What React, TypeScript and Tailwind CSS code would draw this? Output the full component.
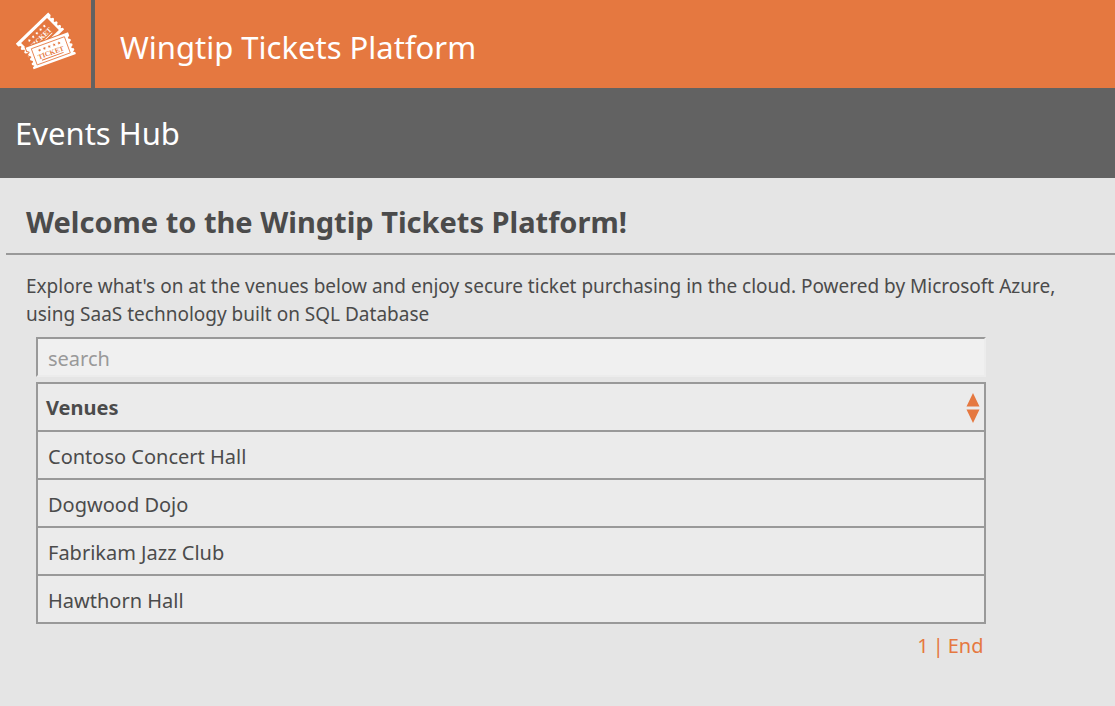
import React from "react";

const venues = ["Contoso Concert Hall", "Dogwood Dojo", "Fabrikam Jazz Club", "Hawthorn Hall"];

const outline =
  "M-22.5 -11.5 H22.5 V-8 L20.5 -6.5 L20.5 -5.5 L22.5 -4.5 V-3 L20.5 -1.5 V-.5 L22.5 .5 V2 L20.5 3.5 V4.5 L22.5 5.5 V7 L20.5 8.5 L22.5 9.5 V11.5 H-22.5 V9.5 L-20.5 8.5 L-22.5 7 V5.5 L-20.5 4.5 V3.5 L-22.5 2 V.5 L-20.5 -.5 V-1.5 L-22.5 -3 V-4.5 L-20.5 -5.5 V-6.5 L-22.5 -8 Z";
const star = "M0 -1.6 L.5 -.5 L1.6 -.45 L.75 .35 L1 1.5 L0 .95 L-1 1.5 L-.75 .35 L-1.6 -.45 L-.5 -.5 Z";

function TicketFace({ ink }: { ink: string }) {
  return (
    <g fill={ink}>
      {[-10.4, -5.2, 0, 5.2, 10.4].map((x) => (
        <path key={x} d={star} transform={`translate(${x} -4.6)`} />
      ))}
      <text
        x="-0.5"
        y="4"
        textAnchor="middle"
        fontFamily="Liberation Serif, serif"
        fontSize="7"
        fontWeight="700"
      >
        TICKET
      </text>
      <rect x="-11.5" y="5.4" width="23" height="0.9" />
    </g>
  );
}

function TicketsLogo() {
  return (
    <svg viewBox="0 0 91 88" className="h-full w-full" aria-hidden="true">
      <g transform="translate(40 36.5) rotate(-44)">
        <path d={outline} fill="#fff" />
        <rect x="-18" y="-8.5" width="36" height="17" fill="#e57840" />
        <TicketFace ink="#fff" />
      </g>
      <g transform="translate(50.8 50.8) rotate(-20)">
        <path d={outline} fill="#fff" stroke="#e57840" strokeWidth="2" paintOrder="stroke" />
        <rect x="-17.6" y="-8.6" width="35.2" height="17.2" fill="none" stroke="#e57840" strokeWidth="0.8" />
        <TicketFace ink="#e57840" />
      </g>
    </svg>
  );
}

export default function App() {
  return (
    <div className="min-h-screen bg-[#e5e5e5] font-['Noto_Sans',sans-serif] text-[#4b4b4b]">
      <header>
        <div className="flex h-22 items-stretch bg-[#e57840] text-white">
          <a href="#home" aria-label="Wingtip Tickets home" className="box-content w-[91px] shrink-0 border-r-4 border-[#626262]">
            <TicketsLogo />
          </a>
          <div className="flex items-center pt-1.5 pl-[25px] text-[31px]">Wingtip Tickets Platform</div>
        </div>
        <div className="flex h-[90px] items-center bg-[#626262] pl-[15px] text-[31px] text-white">Events Hub</div>
      </header>

      <main>
        <h1 className="ml-1.5 border-b-2 border-[#999] pt-[21px] pb-2 pl-5 text-[29px] leading-[46px] font-bold">
          Welcome to the Wingtip Tickets Platform!
        </h1>
        <p className="pt-[17px] pr-8 pl-[26px] text-[19px] leading-7">
          Explore what's on at the venues below and enjoy secure ticket purchasing in the cloud. Powered by Microsoft Azure,
          using SaaS technology built on SQL Database
        </p>

        <div className="pl-9">
          <div className="w-[88%] pt-[9px]">
            <input
              type="search"
              aria-label="Search venues"
              placeholder="search"
              className="block h-10 w-full appearance-none border-2 border-t-[#999] border-r-[#ececec] border-b-[#ececec] border-l-[#999] bg-[#f0f0f0] px-2.5 pt-0.5 text-[20px] outline-none placeholder:text-[#999]"
            />
            <table className="mt-[5px] w-full border-collapse bg-[#ebebeb] text-left text-[20px] leading-7">
              <thead>
                <tr className="h-12">
                  <th scope="col" className="border-2 border-[#999] pt-0.5 pr-1 pl-2 font-bold">
                    <div className="flex items-center justify-between">
                      Venues
                      <button type="button" aria-label="Sort venues" className="cursor-pointer">
                        <svg width="14" height="30" viewBox="0 0 14 30" fill="#e57840" aria-hidden="true">
                          <path d="M7 0 L13.5 13.5 H0.5 Z M0.5 16.5 H13.5 L7 30 Z" />
                        </svg>
                      </button>
                    </div>
                  </th>
                </tr>
              </thead>
              <tbody>
                {venues.map((venue) => (
                  <tr key={venue} className="h-12">
                    <td className="border-2 border-[#999] pt-1 pl-2.5">
                      <a href="#venue">{venue}</a>
                    </td>
                  </tr>
                ))}
              </tbody>
            </table>
            <nav aria-label="Pagination" className="flex justify-end gap-1 pt-2 pr-0.5 text-[20px] leading-7 text-[#e57840]">
              <a href="#page-1">1</a>
              <span>|</span>
              <a href="#end">End</a>
            </nav>
          </div>
        </div>
      </main>
    </div>
  );
}
